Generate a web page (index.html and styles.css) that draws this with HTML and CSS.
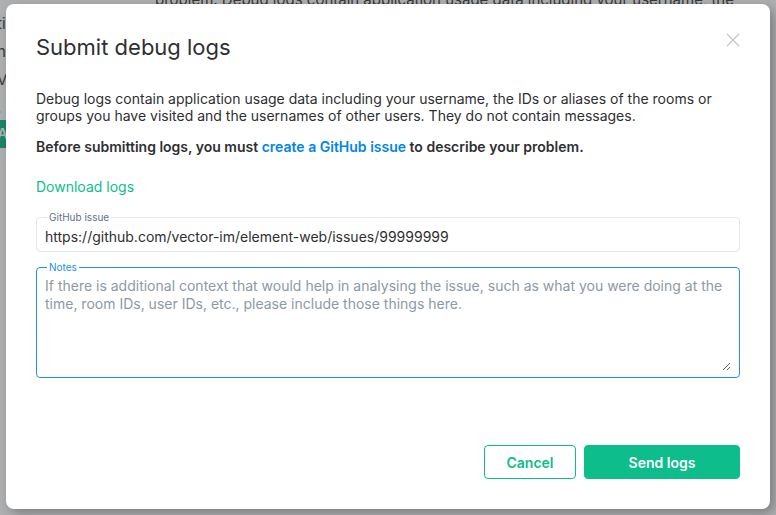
FILE: index.html
```html
<!DOCTYPE html>
<html lang="en">
<head>
    <title>Submit debug logs</title>
    <meta charset="utf-8">
    <meta name="viewport" content="width=device-width, initial-scale=1">
    <link rel="stylesheet" href="styles.css">
</head>
<body>
<div class="page">
    <p class="page-text">problem. Debug logs contain application usage data including your username, the</p>
    <div class="page-side">
        <span>ti</span>
        <span>nc</span>
        <span>V</span>
        <span>.</span>
        <span class="page-button">AI</span>
    </div>
</div>
<div class="overlay"></div>
<div class="dialog" role="dialog">
    <div class="dialog-header">
        <h1 class="dialog-title">Submit debug logs</h1>
        <button class="dialog-close" type="button" aria-label="Close">
            <svg width="14" height="14" viewBox="0 0 14 14">
                <path d="M1 1 L13 13 M13 1 L1 13" stroke="#c1c6cd" stroke-width="1.3" fill="none"/>
            </svg>
        </button>
    </div>
    <p class="dialog-text">Debug logs contain application usage data including your username, the IDs or aliases of the rooms or groups you have visited and the usernames of other users. They do not contain messages.</p>
    <p class="dialog-text dialog-text-bold">Before submitting logs, you must <a class="link" href="#">create a GitHub issue</a> to describe your problem.</p>
    <a class="download" href="#">Download logs</a>
    <fieldset class="field">
        <legend class="field-label">GitHub issue</legend>
        <input class="field-input" type="text" value="https://github.com/vector-im/element-web/issues/99999999">
    </fieldset>
    <fieldset class="field field-focused">
        <legend class="field-label">Notes</legend>
        <textarea class="field-textarea" rows="5" placeholder="If there is additional context that would help in analysing the issue, such as what you were doing at the time, room IDs, user IDs, etc., please include those things here."></textarea>
    </fieldset>
    <div class="dialog-buttons">
        <button class="button button-outline" type="button">Cancel</button>
        <button class="button button-primary" type="button">Send logs</button>
    </div>
</div>
</body>
</html>
```

FILE: styles.css
```css
*, *::before, *::after {
    margin: 0;
    padding: 0;
    box-sizing: border-box;
}

body {
    width: 776px;
    height: 515px;
    overflow: hidden;
    position: relative;
    background-color: #ffffff;
    color: #2e2f32;
    font-family: "Inter", sans-serif;
    font-size: 15px;
}

.page {
    height: 100%;
    color: #3f3f3f;
}

.page-text {
    margin-top: -9px;
    padding-left: 155px;
    font-size: 15px;
    line-height: 18px;
}

.page-side {
    display: flex;
    flex-direction: column;
    width: 20px;
    margin-left: -3px;
    padding-top: 1px;
    font-size: 15px;
    line-height: 28px;
}

.page-button {
    margin-top: -2px;
    width: 30px;
    background-color: #0dbd8b;
    color: #ffffff;
    font-weight: 600;
}

.overlay {
    position: absolute;
    inset: 0;
    background-color: rgba(46, 48, 51, 0.38);
}

.dialog {
    position: absolute;
    left: 6px;
    top: 4px;
    width: 764px;
    height: 505px;
    display: flex;
    flex-direction: column;
    padding: 25px 30px 30px;
    border-radius: 8px;
    background-color: #ffffff;
    box-shadow: 4px 4px 12px rgba(0, 0, 0, 0.3);
}

.dialog-header {
    display: flex;
    align-items: flex-start;
    justify-content: space-between;
    margin-bottom: 25px;
}

.dialog-title {
    font-size: 22px;
    font-weight: 400;
    line-height: 36px;
    color: #2e2f32;
}

.dialog-close {
    width: 14px;
    height: 14px;
    margin-top: 4px;
    border: none;
    background: none;
    cursor: pointer;
}

.dialog-close svg {
    display: block;
}

.dialog-text {
    font-size: 14px;
    line-height: 17px;
    margin-bottom: 14px;
}

.dialog-text-bold {
    font-weight: 600;
    margin-bottom: 23px;
}

.link {
    color: #0086e6;
    text-decoration: none;
}

.download {
    align-self: flex-start;
    color: #0dbd8b;
    font-size: 14px;
    line-height: 18px;
    text-decoration: none;
    margin-bottom: 15px;
}

.field {
    border: 1px solid #e3e8f0;
    border-radius: 4px;
    padding: 0 8px 6px;
    margin-bottom: 9px;
}

.field-label {
    margin-left: 2px;
    padding: 0 2px;
    font-size: 10px;
    line-height: 12px;
    color: #61708b;
}

.field-input, .field-textarea {
    display: block;
    width: 100%;
    padding-top: 4px;
    border: none;
    outline: none;
    background: transparent;
    color: #2e2f32;
    font-family: inherit;
    font-size: 14px;
    line-height: 18px;
}

.field-input {
    height: 22px;
}

.field-focused {
    border-color: #238cf5;
}

.field-focused .field-label {
    color: #238cf5;
}

.field-textarea {
    height: 98px;
    resize: vertical;
}

.field-textarea::placeholder {
    color: #8d99a5;
}

.dialog-buttons {
    display: flex;
    justify-content: flex-end;
    gap: 8px;
    margin-top: auto;
}

.button {
    height: 34px;
    border-radius: 4px;
    font-family: inherit;
    font-size: 14px;
    font-weight: 600;
    cursor: pointer;
}

.button-outline {
    width: 92px;
    border: 1px solid #0dbd8b;
    background-color: #ffffff;
    color: #0dbd8b;
}

.button-primary {
    width: 156px;
    border: 1px solid #0dbd8b;
    background-color: #0dbd8b;
    color: #ffffff;
}
```
